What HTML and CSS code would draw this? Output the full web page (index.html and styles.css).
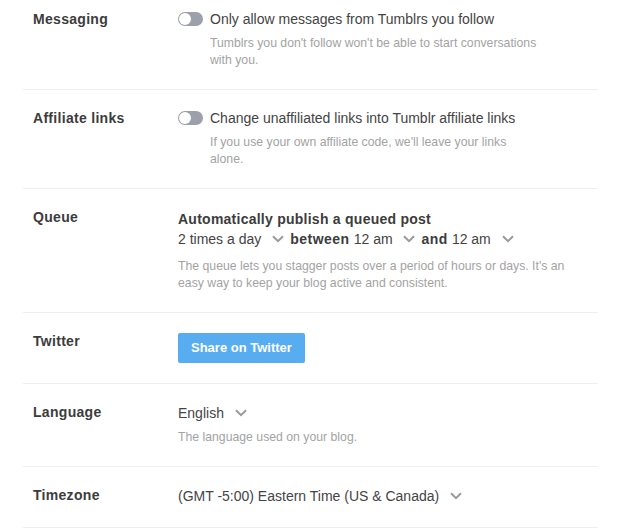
FILE: index.html
```html
<!DOCTYPE html>
<html lang="en">
<head>
<meta charset="utf-8">
<title>Blog settings</title>
<link rel="stylesheet" href="styles.css">
</head>
<body>
<div class="settings">
  <section class="row row--first">
    <div class="label">Messaging</div>
    <div class="content">
      <div class="toggle-line">
        <span class="toggle"><span class="knob"></span></span>
        <span class="main-text">Only allow messages from Tumblrs you follow</span>
      </div>
      <p class="desc desc--inset">Tumblrs you don't follow won't be able to start conversations with you.</p>
    </div>
  </section>

  <section class="row">
    <div class="label">Affiliate links</div>
    <div class="content">
      <div class="toggle-line">
        <span class="toggle"><span class="knob"></span></span>
        <span class="main-text">Change unaffiliated links into Tumblr affiliate links</span>
      </div>
      <p class="desc desc--inset">If you use your own affiliate code, we'll leave your links alone.</p>
    </div>
  </section>

  <section class="row">
    <div class="label">Queue</div>
    <div class="content">
      <div class="strong-text">Automatically publish a queued post</div>
      <div class="select-line select-line--queue">
        <span class="select">2 times a day <svg class="chev" width="12" height="8" viewBox="0 0 12 8"><path d="M1 1.2 L6 6.2 L11 1.2" fill="none" stroke="#9a9a9a" stroke-width="2"/></svg></span>
        <b class="joiner">between</b>
        <span class="select">12 am <svg class="chev" width="12" height="8" viewBox="0 0 12 8"><path d="M1 1.2 L6 6.2 L11 1.2" fill="none" stroke="#9a9a9a" stroke-width="2"/></svg></span>
        <b class="joiner">and</b>
        <span class="select">12 am <svg class="chev" width="12" height="8" viewBox="0 0 12 8"><path d="M1 1.2 L6 6.2 L11 1.2" fill="none" stroke="#9a9a9a" stroke-width="2"/></svg></span>
      </div>
      <p class="desc desc--wide">The queue lets you stagger posts over a period of hours or days. It's an easy way to keep your blog active and consistent.</p>
    </div>
  </section>

  <section class="row">
    <div class="label">Twitter</div>
    <div class="content">
      <button class="twitter-btn" type="button">Share on Twitter</button>
    </div>
  </section>

  <section class="row">
    <div class="label">Language</div>
    <div class="content">
      <div class="select-line">
        <span class="select">English <svg class="chev" width="12" height="8" viewBox="0 0 12 8"><path d="M1 1.2 L6 6.2 L11 1.2" fill="none" stroke="#9a9a9a" stroke-width="2"/></svg></span>
      </div>
      <p class="desc">The language used on your blog.</p>
    </div>
  </section>

  <section class="row">
    <div class="label">Timezone</div>
    <div class="content">
      <div class="select-line">
        <span class="select">(GMT -5:00) Eastern Time (US &amp; Canada) <svg class="chev" width="12" height="8" viewBox="0 0 12 8"><path d="M1 1.2 L6 6.2 L11 1.2" fill="none" stroke="#9a9a9a" stroke-width="2"/></svg></span>
      </div>
    </div>
  </section>
</div>
</body>
</html>
```

FILE: styles.css
```css
html, body {
  margin: 0;
  padding: 0;
  background: #ffffff;
}

body {
  font-family: "Liberation Sans", Arial, Helvetica, sans-serif;
  font-size: 14px;
  line-height: 22px;
  color: #444444;
}

.settings {
  width: 575px;
  margin-left: 23px;
}

.row {
  display: flex;
  padding: 17px 0 20px;
  border-bottom: 1px solid #efefef;
}

.row--first {
  padding-top: 8px;
}

.label {
  width: 145px;
  flex: none;
  padding-left: 10px;
  font-weight: bold;
  letter-spacing: 0.3px;
  color: #3c3c3c;
}

.content {
  flex: 1;
  min-width: 0;
}

.toggle-line {
  display: flex;
  align-items: center;
  gap: 7px;
}

.toggle {
  width: 25px;
  height: 14px;
  border-radius: 7px;
  background: #9ca0aa;
  display: flex;
  align-items: center;
  padding-left: 1px;
  box-sizing: border-box;
  flex: none;
}

.knob {
  width: 12px;
  height: 12px;
  border-radius: 50%;
  background: #ffffff;
}

.main-text {
  color: #444444;
}

.strong-text {
  margin-top: 3px;
  line-height: 20px;
  font-weight: bold;
  letter-spacing: 0.25px;
  color: #3c3c3c;
}

.desc {
  margin: 5px 0 0;
  font-size: 12.25px;
  line-height: 17px;
  color: #a3a3a3;
}

.desc--inset {
  margin-left: 32px;
  max-width: 330px;
}

.desc--wide {
  max-width: 400px;
}

.select-line {
  display: flex;
  align-items: center;
  min-height: 23px;
}

.select-line--queue {
  min-height: 20px;
  line-height: 20px;
  margin-bottom: 9px;
}

.select {
  display: inline-flex;
  align-items: center;
  white-space: pre;
}

.chev {
  margin-left: 7px;
  margin-right: 6px;
  flex: none;
}

.joiner {
  font-weight: bold;
  letter-spacing: 0.5px;
  color: #3c3c3c;
  margin-right: 4px;
}

.twitter-btn {
  margin-top: 3px;
  height: 30px;
  padding: 0 13px;
  border: none;
  border-radius: 2px;
  background: #58acf0;
  color: #ffffff;
  font-family: "Liberation Sans", Arial, Helvetica, sans-serif;
  font-size: 13px;
  font-weight: bold;
  line-height: 30px;
  cursor: pointer;
}
```
